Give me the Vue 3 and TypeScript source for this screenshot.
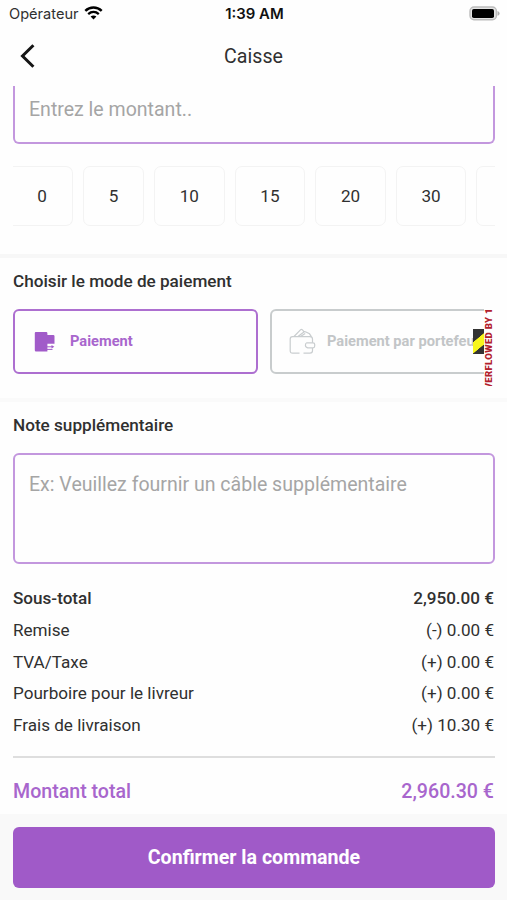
<script setup lang="ts">
interface Tip { label: string; wide: boolean }
interface Line { label: string; amount: string; strong?: boolean }

const tips: Tip[] = [
  { label: '0', wide: false },
  { label: '5', wide: false },
  { label: '10', wide: true },
  { label: '15', wide: true },
  { label: '20', wide: true },
  { label: '30', wide: true },
  { label: '', wide: true },
]

const lines: Line[] = [
  { label: 'Sous-total', amount: '2,950.00 €', strong: true },
  { label: 'Remise', amount: '(-) 0.00 €' },
  { label: 'TVA/Taxe', amount: '(+) 0.00 €' },
  { label: 'Pourboire pour le livreur', amount: '(+) 0.00 €' },
  { label: 'Frais de livraison', amount: '(+) 10.30 €' },
]
</script>

<template>
  <div class="screen">
    <div class="status">
      <div class="carrier">
        <span>Opérateur</span>
        <svg class="wifi" width="19" height="14" viewBox="0 0 19 14">
          <path d="M1.3 4.9 C6 .5 13 .5 17.7 4.9" fill="none" stroke="#000" stroke-width="2.5" />
          <path d="M4.2 8.1 C7.3 5.3 11.7 5.3 14.8 8.1" fill="none" stroke="#000" stroke-width="2.3" />
          <path d="M6.6 10.5 C8.3 9 10.7 9 12.4 10.5 L9.5 13.6Z" fill="#000" />
        </svg>
      </div>
      <span class="clock">1:39 AM</span>
      <svg class="battery" width="31" height="15" viewBox="0 0 31 15">
        <rect x="1" y="1" width="26.4" height="12.8" rx="4" fill="#e4e4e4" stroke="#bcbcbc" stroke-width="1.4" />
        <rect x="3" y="3" width="22" height="9" rx="1.8" fill="#000" />
        <path d="M28.5 5 Q30.6 5.7 30.6 7.4 Q30.6 9 28.5 9.8Z" fill="#b0b0b0" />
      </svg>
    </div>

    <header class="bar">
      <svg class="back" width="16" height="24" viewBox="0 0 16 24">
        <path d="M13.4 1.2 L2.5 12 L13.4 22.8" fill="none" stroke="#151515" stroke-width="3" />
      </svg>
      <h1 class="title">Caisse</h1>
      <span></span>
    </header>

    <main class="content">
      <div class="amount"><span class="hint">Entrez le montant..</span></div>

      <div class="tips">
        <div v-for="(tip, i) in tips" :key="i" class="tip" :class="{ wide: tip.wide }">{{ tip.label }}</div>
      </div>

      <div class="band"></div>

      <h2 class="heading">Choisir le mode de paiement</h2>
      <div class="methods">
        <div class="method active">
          <svg class="cash" width="22" height="22" viewBox="0 0 22 22">
            <path d="M1.8 1 H12.2 Q13.4 1 13.4 2.2 V4 H19.3 Q20.5 4 20.5 5.2 V12.8 H13.4 V20.5 H2 Q.8 20.5 .8 19.3 V2 Q.8 1 1.8 1Z" fill="#a15bc9" />
            <path d="M13 15.8 H18.5 M13 18.4 H18.5" stroke="#a15bc9" stroke-width="1" />
            <path d="M17.5 14 L20.3 15.8 L17.5 17.4Z" fill="#a15bc9" />
          </svg>
          <span>Paiement</span>
        </div>
        <div class="clip">
          <div class="method idle">
            <svg class="wallet" width="27" height="27" viewBox="0 0 27 27" fill="none" stroke="#c9cdcf" stroke-width="1.2">
              <path d="M10.5 25.2 H3.6 Q1.2 25.2 1.2 22.8 V11 Q1.2 8.7 3.5 8.7 H21 Q23.5 8.7 23.5 11 V14.8 M23.5 20 V22.8 Q23.5 25.2 21 25.2 H14.5" />
              <path d="M17.8 14.8 H24 Q25.7 14.8 25.7 16.4 V18 Q25.7 19.8 24 19.8 H18.8 Q16.4 19.3 16.4 17.2 Q16.5 15.2 17.8 14.8Z" />
              <path d="M5 8.5 L11.7 1.7 Q12.4 1 13.2 1.7 L15.2 3.8 M9 8.5 L14.2 4.5 Q15.6 3 17 4.1 L20.5 5.8 L22.5 8.8 M11.5 8.5 L16.2 5.6" />
            </svg>
            <span>Paiement par portefeuille</span>
          </div>
          <div class="hazard"></div>
        </div>
        <div class="overflow"><span>RIGHT OVERFLOWED BY 117 PIXELS</span></div>
      </div>

      <div class="band faint"></div>

      <h2 class="heading">Note supplémentaire</h2>
      <div class="note"><span class="hint">Ex: Veuillez fournir un câble supplémentaire</span></div>

      <div class="lines">
        <div v-for="line in lines" :key="line.label" class="line" :class="{ strong: line.strong }">
          <span>{{ line.label }}</span>
          <span>{{ line.amount }}</span>
        </div>
      </div>

      <div class="rule"></div>
      <div class="total"><span>Montant total</span><span>2,960.30 €</span></div>
    </main>

    <footer class="footer">
      <button class="confirm" type="button">Confirmer la commande</button>
    </footer>
  </div>
</template>

<style>
body {
  margin: 0;
  background: #fff;
}
</style>

<style scoped>
.screen {
  display: flex;
  flex-direction: column;
  width: 507px;
  height: 900px;
  overflow: hidden;
  background: #fefefe;
  color: #303030;
  font-family: Roboto, sans-serif;
  font-size: 17.1px;
}
.screen * {
  box-sizing: border-box;
  white-space: nowrap;
}
.status {
  display: grid;
  grid-template-columns: 1fr auto 1fr;
  height: 28px;
  padding: 0 7px 0 9px;
  font-family: Inter, sans-serif;
  font-size: 14.6px;
  align-items: center;
}
.carrier {
  display: flex;
  align-items: center;
  gap: 5px;
}
.wifi { margin-top: -3px; }
.clock {
  font-size: 14.9px;
  font-weight: 600;
  color: #111;
}
.battery {
  justify-self: end;
  margin-top: -2px;
}
.bar {
  display: grid;
  grid-template-columns: 1fr auto 1fr;
  align-items: center;
  height: 58px;
  padding: 0 20px;
}
.back { margin-top: -2px; }
.title {
  margin: 0;
  font-size: 19.6px;
  font-weight: 400;
  line-height: 24px;
}
.content {
  height: 728px;
  padding: 0 12px 0 13px;
  overflow: hidden;
}
.amount {
  height: 58px;
  padding: 12px 14px;
  border: 2px solid #c397de;
  border-top: 0;
  border-radius: 0 0 6px 6px;
}
.hint {
  display: block;
  color: #a5a5a5;
  font-size: 19.55px;
  line-height: 24px;
}
.tips {
  display: flex;
  gap: 10px;
  margin-top: 22px;
  overflow: hidden;
}
.tip {
  flex: none;
  display: flex;
  align-items: center;
  justify-content: center;
  width: 61px;
  height: 60px;
  border: 1px solid #f3f3f3;
  border-radius: 7px;
}
.tip:first-child {
  width: 60px;
  padding-right: 1px;
  border-left: 0;
  border-radius: 0 7px 7px 0;
}
.tip.wide { width: 70.6px; }
.band {
  height: 4px;
  margin: 28px -12px 0 -13px;
  background: #f7f7f7;
}
.heading {
  margin: 13px 0 0;
  font-size: 17.15px;
  font-weight: 500;
  line-height: 20px;
}
.methods {
  display: flex;
  height: 65px;
  margin-top: 18px;
}
.method {
  flex: none;
  display: flex;
  align-items: center;
  width: 245px;
  height: 65px;
  padding-left: 20px;
  border: 2px solid #ad6fd0;
  border-radius: 6px;
  font-size: 14.65px;
  font-weight: 700;
}
.method span { margin-top: -2px; }
.active {
  gap: 13px;
  color: #a866cd;
}
.cash {
  margin-right: 1px;
  margin-left: -1px;
}
.clip {
  position: relative;
  width: 214px;
  margin-left: 12px;
  overflow: hidden;
}
.idle {
  gap: 11px;
  padding-left: 17px;
  border-color: #c8cccd;
  color: #c2c5c7;
}
.wallet { margin-top: -1px; }
.hazard {
  position: absolute;
  right: 0;
  top: 20px;
  width: 11px;
  height: 25px;
  background: linear-gradient(140deg, #333 0 38%, #f8f51d 40% 71%, #333 73%);
}
.overflow {
  position: relative;
  width: 11px;
  height: 78px;
  margin-top: -1px;
  overflow: hidden;
}
.overflow span {
  position: absolute;
  bottom: -42px;
  left: -1px;
  writing-mode: vertical-rl;
  transform: rotate(180deg);
  color: #b2202c;
  font-size: 9.6px;
  font-weight: 900;
  letter-spacing: .3px;
  line-height: 11px;
}
.band.faint {
  margin-top: 24px;
  background: #fafafa;
}
.note {
  height: 111px;
  margin-top: 18px;
  padding: 18px 14px;
  border: 2px solid #c397de;
  border-radius: 6px;
}
.lines { padding: 18px 1px 0 0; }
.line {
  display: flex;
  justify-content: space-between;
  height: 31.8px;
  line-height: 32px;
}
.strong { font-weight: 500; }
.rule {
  height: 2px;
  margin-top: 15px;
  background: #dedede;
}
.total {
  display: flex;
  justify-content: space-between;
  margin-top: 21px;
  padding-right: 1px;
  color: #a866cd;
  font-size: 19.6px;
  font-weight: 500;
  line-height: 26px;
}
.footer {
  height: 86px;
  padding: 13px 12px 0 13px;
  background: #f9f9f9;
}
.confirm {
  display: block;
  width: 100%;
  height: 61px;
  padding: 0;
  border: 0;
  border-radius: 6px;
  background: #a05ac8;
  color: #fff;
  font-family: inherit;
  font-size: 19.6px;
  font-weight: 700;
}
</style>
